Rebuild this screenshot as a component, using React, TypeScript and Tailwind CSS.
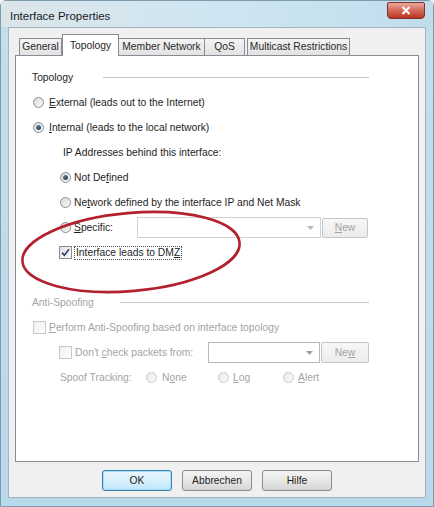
import React from "react";

const FONT = "font-['Liberation_Sans',Arial,sans-serif]";

function Radio({ checked = false, disabled = false }: { checked?: boolean; disabled?: boolean }) {
  return (
    <span
      className={
        "relative flex h-[11px] w-[11px] shrink-0 items-center justify-center rounded-full border bg-gradient-to-br " +
        (disabled
          ? "border-[#c9cbcd] from-[#e9e9e9] to-[#fbfbfb]"
          : "border-[#8a8d91] from-[#d8d8d8] to-[#fafafa]")
      }
    >
      {checked && <span className="h-[5px] w-[5px] rounded-full bg-gradient-to-br from-[#6a8cab] to-[#1d3550]" />}
    </span>
  );
}

function Checkbox({ checked = false, disabled = false }: { checked?: boolean; disabled?: boolean }) {
  return (
    <span
      className={
        "flex h-[13px] w-[13px] shrink-0 items-center justify-center border bg-gradient-to-br " +
        (disabled ? "border-[#c6c8ca] from-[#f1f1f1] to-[#fcfcfc]" : "border-[#8a8d91] from-[#e2e2e2] to-[#fbfbfb]")
      }
    >
      {checked && (
        <svg width="9" height="9" viewBox="0 0 9 9">
          <path d="M1 4.6 L3.4 7.2 L8 1.2" fill="none" stroke="#2a3d6b" strokeWidth="1.6" />
        </svg>
      )}
    </span>
  );
}

function Combo({ width, disabled = false }: { width: string; disabled?: boolean }) {
  return (
    <div
      className={
        "flex h-[21px] items-center justify-end border bg-white pr-[6px] " +
        width +
        (disabled ? " border-[#cfd1d4]" : " border-[#b5b8bc]")
      }
    >
      <svg width="7" height="4" viewBox="0 0 7 4">
        <path d="M0 0 H7 L3.5 4 Z" fill={disabled ? "#b8b8b8" : "#a0a0a0"} />
      </svg>
    </div>
  );
}

function SmallButton({ label, width }: { label: React.ReactNode; width: string }) {
  return (
    <div
      className={
        "flex h-[20px] items-center justify-center rounded-[2px] border border-[#c2c5c9] bg-gradient-to-b from-[#f7f7f7] to-[#ececec] text-[#a3a3a3] " +
        width
      }
    >
      {label}
    </div>
  );
}

function GroupHeader({ title, lineStart, disabled = false }: { title: string; lineStart: string; disabled?: boolean }) {
  return (
    <div className="flex h-[25px] items-center">
      <span className={(disabled ? "text-[#a4a4a4] " : "text-[#1e1e1e] ") + lineStart}>{title}</span>
      <div className="flex-1 border-t border-[#c4c7ca]" />
    </div>
  );
}

function DialogButton({ label, primary = false }: { label: string; primary?: boolean }) {
  return (
    <div
      className={
        "flex h-[21px] w-[70px] items-center justify-center rounded-[3px] border bg-gradient-to-b text-[#1e1e1e] " +
        (primary
          ? "border-[#3c7fb1] from-[#eaf6fd] via-[#d9f0fc] to-[#bee6fd] shadow-[inset_0_0_0_1px_#a7dcf5]"
          : "border-[#8b8b8b] from-[#f3f3f3] via-[#e8e8e8] to-[#d4d4d4]")
      }
    >
      {label}
    </div>
  );
}

// mnemonic underline
const M = ({ c }: { c: string }) => <u className="underline-offset-[1px]">{c}</u>;

export default function App() {
  const tabs = [
    { label: "General", w: "w-[43px]" },
    { label: "Topology", w: "w-[57px]", active: true },
    { label: "Member Network", w: "w-[87px]" },
    { label: "QoS", w: "w-[41px]" },
    { label: "Multicast Restrictions", w: "w-[103px] ml-[2px]" },
  ];

  return (
    <div className={"relative h-[507px] w-[434px] overflow-hidden bg-[#fafafa] text-[10.3px] " + FONT}>
      <div className="flex h-full w-full flex-col rounded-t-[6px] border border-[#7d9bad] bg-gradient-to-b from-[#c3dfee] to-[#b8d9ea]">
        {/* Title bar */}
        <div className="flex h-[26px] shrink-0 items-start justify-between bg-gradient-to-r from-[#dbe5ea] via-[#cfe6f2] to-[#c0ddec] pl-[9px] pr-[8px]">
          <span className="mt-[7px] text-[11.5px] text-[#1a1a1a]">Interface Properties</span>
          <div className="mt-px flex h-[17px] w-[38px] items-center justify-center rounded-b-[4px] rounded-t-[2px] border border-[#7e3328] bg-gradient-to-b from-[#e9a89c] via-[#d4685a] to-[#b8321f]">
            <svg width="10" height="9" viewBox="0 0 10 9">
              <path d="M1.5 1 L8.5 8 M8.5 1 L1.5 8" stroke="#fff" strokeWidth="2" />
            </svg>
          </div>
        </div>

        {/* Body */}
        <div className="mx-[7px] flex flex-1 flex-col border border-[#a4b3bf] bg-[#f0f0f0] px-[6px] pt-[6px]">
          {/* Tabs */}
          <div className="relative z-10 flex h-[21px] items-end pl-[5px]">
            {tabs.map((t) =>
              t.active ? (
                <div
                  key={t.label}
                  className={"flex h-[22px] -mb-px items-start justify-center border border-b-0 border-[#898c95] bg-white pt-[3px] text-[#1e1e1e] " + t.w}
                >
                  {t.label}
                </div>
              ) : (
                <div
                  key={t.label}
                  className={"-ml-px flex h-[17px] items-center justify-center border border-b-0 border-[#898c95] bg-gradient-to-b from-[#f4f4f4] to-[#e2e2e2] text-[#2a2a2a] " + t.w}
                >
                  {t.label}
                </div>
              )
            )}
          </div>

          {/* Panel */}
          <div className="flex h-[407px] flex-col border border-[#898c95] bg-white pl-[16px] pr-[49px] pt-[9px] text-[#1e1e1e]">
            <GroupHeader title="Topology" lineStart="w-[71px]" />
            <div className="flex h-[25px] items-center gap-[5px] pl-[1px]">
              <Radio />
              <span><M c="E" />xternal (leads out to the Internet)</span>
            </div>
            <div className="flex h-[25px] items-center gap-[5px] pl-[1px]">
              <Radio checked />
              <span><M c="I" />nternal (leads to the local network)</span>
            </div>
            <div className="flex h-[25px] items-center pl-[31px]">IP Addresses behind this interface:</div>
            <div className="flex h-[25px] items-center gap-[3px] pl-[28px]">
              <Radio checked />
              <span>Not De<M c="f" />ined</span>
            </div>
            <div className="flex h-[25px] items-center gap-[3px] pl-[28px]">
              <Radio />
              <span>Ne<M c="t" />work defined by the interface IP and Net Mask</span>
            </div>
            <div className="flex h-[25px] items-center pl-[28px]">
              <Radio />
              <span className="ml-[3px] w-[63px]"><M c="S" />pecific:</span>
              <Combo width="w-[184px]" disabled />
              <SmallButton label={<span><M c="N" />ew</span>} width="ml-px w-[46px]" />
            </div>
            <div className="flex h-[25px] items-center gap-[2px] pl-[27px]">
              <Checkbox checked />
              <span className="border border-dotted border-[#555] px-px leading-[12px]">
                Interface leads to DM<M c="Z" />
              </span>
            </div>
            <div className="h-[25px]" />
            <GroupHeader title="Anti-Spoofing" lineStart="w-[88px]" disabled />
            <div className="flex h-[25px] items-center gap-[3px] pl-[1px] text-[#a4a4a4]">
              <Checkbox disabled />
              <span><M c="P" />erform Anti-Spoofing based on interface topology</span>
            </div>
            <div className="flex h-[25px] items-center pl-[27px] text-[#a4a4a4]">
              <Checkbox disabled />
              <span className="ml-[3px] w-[133px]">Don't <M c="c" />heck packets from:</span>
              <Combo width="w-[112px]" />
              <SmallButton label={<span>Ne<M c="w" /></span>} width="ml-px w-[48px] h-[21px]" />
            </div>
            <div className="flex h-[25px] items-center pl-[28px] text-[#a4a4a4]">
              <span className="w-[86px]">Spoof Tracking:</span>
              <Radio disabled />
              <span className="ml-[5px] w-[56px]">N<M c="o" />ne</span>
              <Radio disabled />
              <span className="ml-[4px] w-[50px]"><M c="L" />og</span>
              <Radio disabled />
              <span className="ml-[4px]"><M c="A" />lert</span>
            </div>
          </div>

          {/* Buttons */}
          <div className="flex h-[35px] items-start justify-center gap-[10px] pt-[8px]">
            <DialogButton label="OK" primary />
            <DialogButton label="Abbrechen" />
            <DialogButton label="Hilfe" />
          </div>
        </div>
        <div className="h-[8px] shrink-0" />
      </div>

      {/* Red hand-drawn highlight */}
      <svg className="pointer-events-none absolute left-0 top-0" width="434" height="507" viewBox="0 0 434 507">
        <ellipse
          cx="131"
          cy="252"
          rx="109"
          ry="39"
          transform="rotate(-5 131 252)"
          fill="none"
          stroke="#b3202e"
          strokeWidth="2.6"
        />
      </svg>
    </div>
  );
}
